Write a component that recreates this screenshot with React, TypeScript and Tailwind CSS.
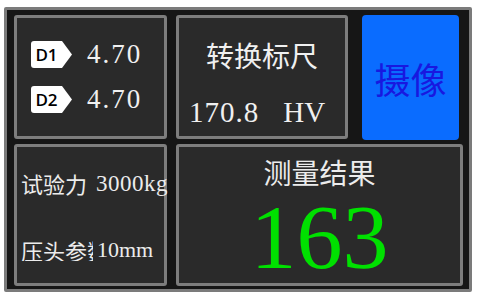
const serif = "font-['Liberation_Serif','Noto_Sans_CJK_SC',serif]";
const cjk = "font-['Noto_Sans_CJK_SC','Noto_Sans',sans-serif]";

function Badge({ label }: { label: string }) {
  return (
    <div className="relative w-[41px] h-[27px] shrink-0">
      <svg width="41" height="27" viewBox="0 0 41 27" className="absolute left-0 top-0 w-[41px] h-[27px]">
        <path d="M3 0 H31 L41 13.5 L31 27 H3 Q0 27 0 24 V3 Q0 0 3 0 Z" fill="#ffffff" />
      </svg>
      <span className="relative flex h-full w-[31px] items-center justify-center font-['Open_Sans',sans-serif] text-[17px] font-semibold leading-none text-black">
        {label}
      </span>
    </div>
  );
}

function DRow({ label, value }: { label: string; value: string }) {
  return (
    <div className="flex items-center gap-[15px]">
      <Badge label={label} />
      <span className={`${serif} text-[27px] leading-none tracking-[2px] text-[#f0f0f0]`}>{value}</span>
    </div>
  );
}

export default function App() {
  const panel = "rounded-[3px] border-[3px] border-[#7d7d7d] bg-[#2a2a2a]";
  return (
    <div className="w-[482px] h-[298px] bg-white pt-[7px] pl-[4px]">
      <div className="w-[468px] h-[285px] rounded-[2px] border-[3px] border-[#7b7b7b] bg-[#161616] pl-[7px] pt-[5px] flex flex-col gap-[4px]">
        <div className="flex">
          <div className={`${panel} w-[153px] h-[124px] flex flex-col pl-[14px] pt-[23px] gap-[18px]`}>
            <DRow label="D1" value="4.70" />
            <DRow label="D2" value="4.70" />
          </div>
          <div className={`${panel} ml-[9px] w-[172px] h-[124px] flex flex-col`}>
            <div className={`${cjk} mt-[23px] text-center text-[28px] leading-none text-[#f0f0f0]`}>转换标尺</div>
            <div className={`${serif} mt-[29px] pl-[10px] flex text-[29px] leading-none text-[#f0f0f0]`}>
              <span className="tracking-[1px]">170.8</span>
              <span className="ml-[24px]">HV</span>
            </div>
          </div>
          <button className={`${cjk} ml-[14px] w-[97px] h-[125px] rounded-[4px] bg-[#0a6cff] text-[36px] text-[#1818e0] flex items-center justify-center`}>
            摄像
          </button>
        </div>
        <div className="flex">
          <div className={`${panel} w-[153px] h-[142px] flex flex-col pl-[4px] pt-[25px] text-[22px] leading-none text-[#ececec] ${serif}`}>
            <div className="flex whitespace-nowrap">
              <span className={cjk}>试验力</span>
              <span className="ml-[9px] text-[23px] tracking-[0.5px]">3000kg</span>
            </div>
            <div className="mt-[44px] flex whitespace-nowrap">
              <span className={`${cjk} w-[72px] overflow-hidden`}>压头参数</span>
              <span className="ml-[4px]">10mm</span>
            </div>
          </div>
          <div className={`${panel} ml-[9px] w-[287px] h-[142px] flex flex-col items-center`}>
            <div className={`${cjk} mt-[11px] text-[28px] leading-none text-[#ececec]`}>测量结果</div>
            <div className={`${serif} mt-[13px] text-[92px] leading-[76px] text-[#00e000]`}>163</div>
          </div>
        </div>
      </div>
    </div>
  );
}
